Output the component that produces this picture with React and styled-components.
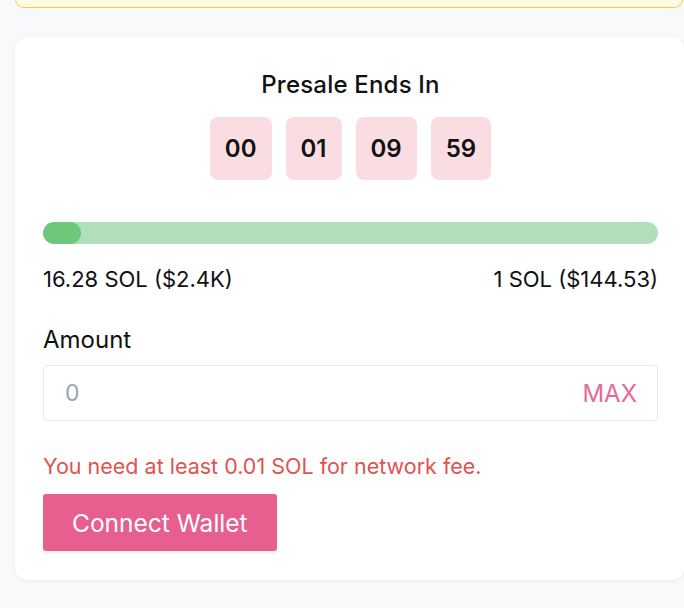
import React from "react";
import styled, { createGlobalStyle } from "styled-components";

const GlobalStyle = createGlobalStyle`
  * { box-sizing: border-box; }
  body {
    margin: 0;
    background: #f8f9fb;
    font-family: Inter, "Noto Sans", "Liberation Sans", sans-serif;
    color: #111;
  }
`;

const Page = styled.div`
  padding-left: 15px;
  min-height: 608px;
  overflow: hidden;
`;

const Banner = styled.div`
  height: 9px;
  margin-top: -1px;
  background: #fffde8;
  border: 1px solid #f5cf3a;
  border-top: none;
  border-radius: 0 0 10px 10px;
  width: 668px;
`;

const Card = styled.section`
  margin-top: 29px;
  width: 669px;
  background: #fff;
  border-radius: 12px;
  box-shadow: 0 1px 4px rgba(15, 23, 42, 0.06);
  padding: 34px 26px 29px 28px;
`;

const Title = styled.h2`
  margin: 0;
  text-align: center;
  font-size: 24px;
  line-height: 28px;
  font-weight: 500;
  letter-spacing: 0.2px;
`;

const Countdown = styled.div`
  margin-top: 18px;
  display: flex;
  justify-content: center;
  gap: 14px;
`;

const TimeBox = styled.div`
  height: 63px;
  padding: 0 15px;
  display: flex;
  align-items: center;
  justify-content: center;
  background: #f9dde2;
  border-radius: 8px;
  font-size: 24px;
  font-weight: 600;
`;

const Track = styled.div`
  margin-top: 42px;
  height: 22px;
  border-radius: 11px;
  background: #b2dfbb;
  overflow: hidden;
`;

const Fill = styled.div`
  height: 100%;
  border-radius: 11px;
  background: #6fc77b;
`;

const Stats = styled.div`
  margin-top: 22px;
  display: flex;
  justify-content: space-between;
  font-size: 22px;
  line-height: 26px;
`;

const Label = styled.label`
  display: block;
  margin-top: 34px;
  font-size: 24px;
  line-height: 28px;
`;

const InputWrap = styled.div`
  margin-top: 11px;
  height: 56px;
  border: 1px solid #e5e7eb;
  border-radius: 4px;
  display: flex;
  align-items: center;
  padding: 0 20px 0 21px;
`;

const Input = styled.input`
  flex: 1;
  border: none;
  outline: none;
  background: transparent;
  font-family: inherit;
  font-size: 23px;
  color: #111;
  padding: 0;
  &::placeholder { color: #9ca3af; }
`;

const MaxButton = styled.button`
  border: none;
  background: none;
  padding: 0;
  font-family: inherit;
  font-size: 24px;
  color: #e8689a;
  cursor: pointer;
`;

const ErrorText = styled.p`
  margin: 32px 0 0;
  font-size: 21.5px;
  line-height: 26px;
  color: #e0534f;
`;

const ConnectButton = styled.button`
  margin-top: 15px;
  height: 57px;
  padding: 0 29px;
  border: none;
  border-radius: 3px;
  background: #e75f8f;
  color: #fff;
  font-family: inherit;
  font-size: 24.5px;
  box-shadow: 0 3px 2px rgba(0, 0, 0, 0.05);
  cursor: pointer;
`;

const time = ["00", "01", "09", "59"];

export default function App() {
  const progress = 6.2;
  return (
    <Page>
      <GlobalStyle />
      <Banner />
      <Card>
        <Title>Presale Ends In</Title>
        <Countdown>
          {time.map((t, i) => (
            <TimeBox key={i}>{t}</TimeBox>
          ))}
        </Countdown>
        <Track>
          <Fill style={{ width: `${progress}%` }} />
        </Track>
        <Stats>
          <span>16.28 SOL ($2.4K)</span>
          <span>1 SOL ($144.53)</span>
        </Stats>
        <Label>Amount</Label>
        <InputWrap>
          <Input placeholder="0" />
          <MaxButton>MAX</MaxButton>
        </InputWrap>
        <ErrorText>You need at least 0.01 SOL for network fee.</ErrorText>
        <ConnectButton>Connect Wallet</ConnectButton>
      </Card>
    </Page>
  );
}
